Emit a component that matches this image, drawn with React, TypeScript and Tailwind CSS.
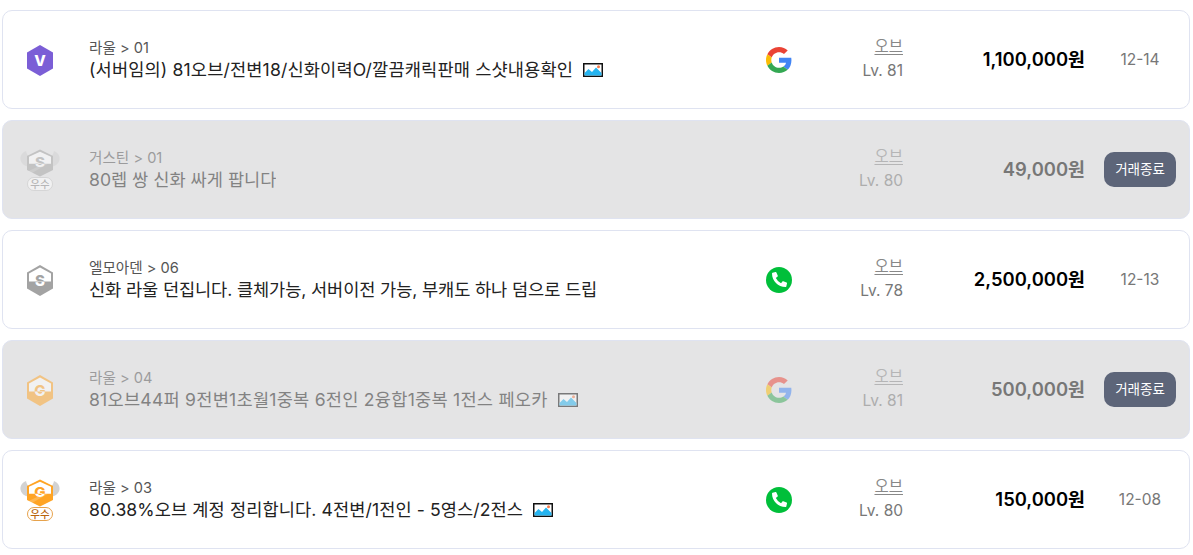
import React from "react";
import { FaPhoneAlt } from "react-icons/fa";

type Row = {
  grade: "V" | "S" | "G";
  winged?: boolean;
  path: string;
  title: string;
  tracking: string;
  hasImage?: boolean;
  messenger?: "google" | "phone";
  level: string;
  price: string;
  date?: string;
};

const rows: Row[] = [
  { grade: "V", path: "라울 > 01", title: "(서버임의) 81오브/전변18/신화이력O/깔끔캐릭판매 스샷내용확인", tracking: "tracking-[0.14px]", hasImage: true, messenger: "google", level: "Lv. 81", price: "1,100,000원", date: "12-14" },
  { grade: "S", winged: true, path: "거스틴 > 01", title: "80렙 쌍 신화 싸게 팝니다", tracking: "tracking-normal", level: "Lv. 80", price: "49,000원" },
  { grade: "S", path: "엘모아덴 > 06", title: "신화 라울 던집니다. 클체가능, 서버이전 가능, 부캐도 하나 덤으로 드립", tracking: "tracking-[-0.12px]", messenger: "phone", level: "Lv. 78", price: "2,500,000원", date: "12-13" },
  { grade: "G", path: "라울 > 04", title: "81오브44퍼 9전변1초월1중복 6전인 2융합1중복 1전스 페오카", tracking: "tracking-[0.23px]", hasImage: true, messenger: "google", level: "Lv. 81", price: "500,000원" },
  { grade: "G", winged: true, path: "라울 > 03", title: "80.38%오브 계정 정리합니다. 4전변/1전인 - 5영스/2전스", tracking: "tracking-[0.09px]", hasImage: true, messenger: "phone", level: "Lv. 80", price: "150,000원", date: "12-08" },
];

const GoogleIcon = () => (
  <svg viewBox="0 0 48 48" className="w-[26px] h-[26px]">
    <path fill="#EA4335" d="M24 9.5c3.54 0 6.71 1.22 9.21 3.6l6.85-6.85C35.9 2.38 30.47 0 24 0 14.62 0 6.51 5.38 2.56 13.22l7.98 6.19C12.43 13.72 17.74 9.5 24 9.5z" />
    <path fill="#4285F4" d="M46.98 24.55c0-1.57-.15-3.09-.38-4.55H24v9.02h12.94c-.58 2.96-2.26 5.48-4.78 7.18l7.73 6c4.51-4.18 7.09-10.36 7.09-17.65z" />
    <path fill="#FBBC05" d="M10.53 28.59c-.48-1.45-.76-2.99-.76-4.59s.27-3.14.76-4.59l-7.98-6.19C.92 16.46 0 20.12 0 24c0 3.88.92 7.54 2.56 10.78l7.97-6.19z" />
    <path fill="#34A853" d="M24 48c6.48 0 11.93-2.13 15.89-5.81l-7.73-6c-2.15 1.45-4.92 2.3-8.16 2.3-6.26 0-11.57-4.22-13.47-9.91l-7.98 6.19C6.51 42.62 14.62 48 24 48z" />
  </svg>
);

const PhoneIcon = () => (
  <div className="w-[26px] h-[26px] rounded-full bg-[#00bf3a] flex items-center justify-center text-white">
    <FaPhoneAlt size={15} />
  </div>
);

const ImageIcon = () => (
  <svg viewBox="0 0 20 14" className="w-5 h-[14px] shrink-0">
    <rect x="0.75" y="0.75" width="18.5" height="12.5" fill="#fff" stroke="#111" strokeWidth="1.5" />
    <path d="M1.500 12.500V10L5.500 6 9 9 13 4.500l5.500 5.500v2.500z" fill="#25b4f0" />
    <circle cx="15.5" cy="3.8" r="1.5" fill="#f47b4b" />
  </svg>
);

const colors = { V: "#7b5ed6", S: "#a3a3a3", G: "#ffa424" };

const Badge = ({ grade, winged }: { grade: Row["grade"]; winged?: boolean }) => {
  const c = colors[grade];
  const clipId = `lower-half-${grade}`;
  return (
    <svg viewBox="0 0 40 46" className="w-10 h-[46px]">
      {winged && (
        <g fill="#d2d2d2">
          <path d="M6 4C2 5.500 0 9 .5 12.500c.5 3.500 3.500 6.500 8 7l1-10C8 9 6.500 7 6 4z" />
          <path d="M34 4c4 1.500 6 5 5.500 8.500-.5 3.500-3.500 6.500-8 7l-1-10c1.500-.5 3-2.500 3.500-5.500z" />
        </g>
      )}
      <g transform={winged ? "translate(7 2.500) scale(1 0.87)" : "translate(7 8)"}>
        <path d="M13 0L26 7.500V23.500L13 31 0 23.500V7.500z" fill={c} />
        {grade === "V" ? (
          <text x="13" y="21" textAnchor="middle" fontSize="15" fontWeight="800" fill="#fff" fontFamily="Inter, sans-serif">V</text>
        ) : (
          <g>
            <clipPath id={clipId}>
              <rect x="0" y="16.500" width="26" height="15" />
            </clipPath>
            <path d="M13 2.500L24 8.400V16.500H2V8.400z" fill="#fff" />
            {winged && <path d="M1 25L17 16.500h4L5 27z" fill="#fff" opacity="0.2" />}
            <text x="13" y="20.500" textAnchor="middle" fontSize="15" fontWeight="800" fill={c} fontFamily="Inter, sans-serif">{grade}</text>
            <text x="13" y="20.500" textAnchor="middle" fontSize="15" fontWeight="800" fill="#fff" clipPath={`url(#${clipId})`} fontFamily="Inter, sans-serif">{grade}</text>
          </g>
        )}
      </g>
      {winged && (
        <g>
          <rect x="7.500" y="30.500" width="25" height="13" rx="6.500" fill="#fff" stroke={grade === "G" ? "#e08a1e" : "#bdbdbd"} strokeWidth="0.800" />
          <text x="20" y="41" textAnchor="middle" fontSize="10.500" fontWeight="500" fill={grade === "G" ? "#b8640c" : "#8a8a8a"} fontFamily="'Noto Sans CJK KR', sans-serif">우수</text>
        </g>
      )}
    </svg>
  );
};

const Card = ({ row }: { row: Row }) => {
  const closed = !row.date;
  const dim = closed ? "opacity-50" : "";
  return (
    <div className={`flex items-center h-[99px] border rounded-[10px] border-[#dfe3f1] pr-[13px] ${closed ? "bg-[#e4e4e5]" : "bg-white"}`}>
      <div className={`w-[73px] flex justify-center shrink-0 ${dim}`}>
        <Badge grade={row.grade} winged={row.winged} />
      </div>
      <div className={`ml-[13px] flex-1 min-w-0 ${dim}`}>
        <div className="text-[14.600px] leading-[20px] text-[#555]">{row.path}</div>
        <div className={`flex items-center gap-[10px] text-[17.600px] leading-[24px] text-[#222] ${row.tracking}`}>
          <span className="truncate">{row.title}</span>
          {row.hasImage && <ImageIcon />}
        </div>
      </div>
      <div className={`w-[50px] flex justify-center shrink-0 ${dim}`}>
        {row.messenger === "google" && <GoogleIcon />}
        {row.messenger === "phone" && <PhoneIcon />}
      </div>
      <div className={`w-[99px] shrink-0 text-right text-[15.500px] text-[#777] leading-[24px] pb-[2px] ${dim}`}>
        <div className="underline underline-offset-2 text-[#888]">오브</div>
        <div>{row.level}</div>
      </div>
      <div className={`w-[182px] shrink-0 text-right text-[18.400px] font-semibold ${closed ? "text-[#777]" : "text-black"}`}>
        {row.price}
      </div>
      <div className="ml-[19px] w-[72px] shrink-0 flex justify-center">
        {closed ? (
          <div className="w-[72px] h-[35px] rounded-[10px] bg-[#5d6579] text-white text-[13.500px] flex items-center justify-center">거래종료</div>
        ) : (
          <span className="text-[15.500px] text-[#777]">{row.date}</span>
        )}
      </div>
    </div>
  );
};

export default function App() {
  return (
    <div className="min-h-[555px] bg-white pt-[10px] pl-[2px] pr-[3px] flex flex-col gap-[11px] font-['Inter','Noto_Sans_CJK_KR',sans-serif]">
      {rows.map((row, i) => (
        <Card key={i} row={row} />
      ))}
    </div>
  );
}
